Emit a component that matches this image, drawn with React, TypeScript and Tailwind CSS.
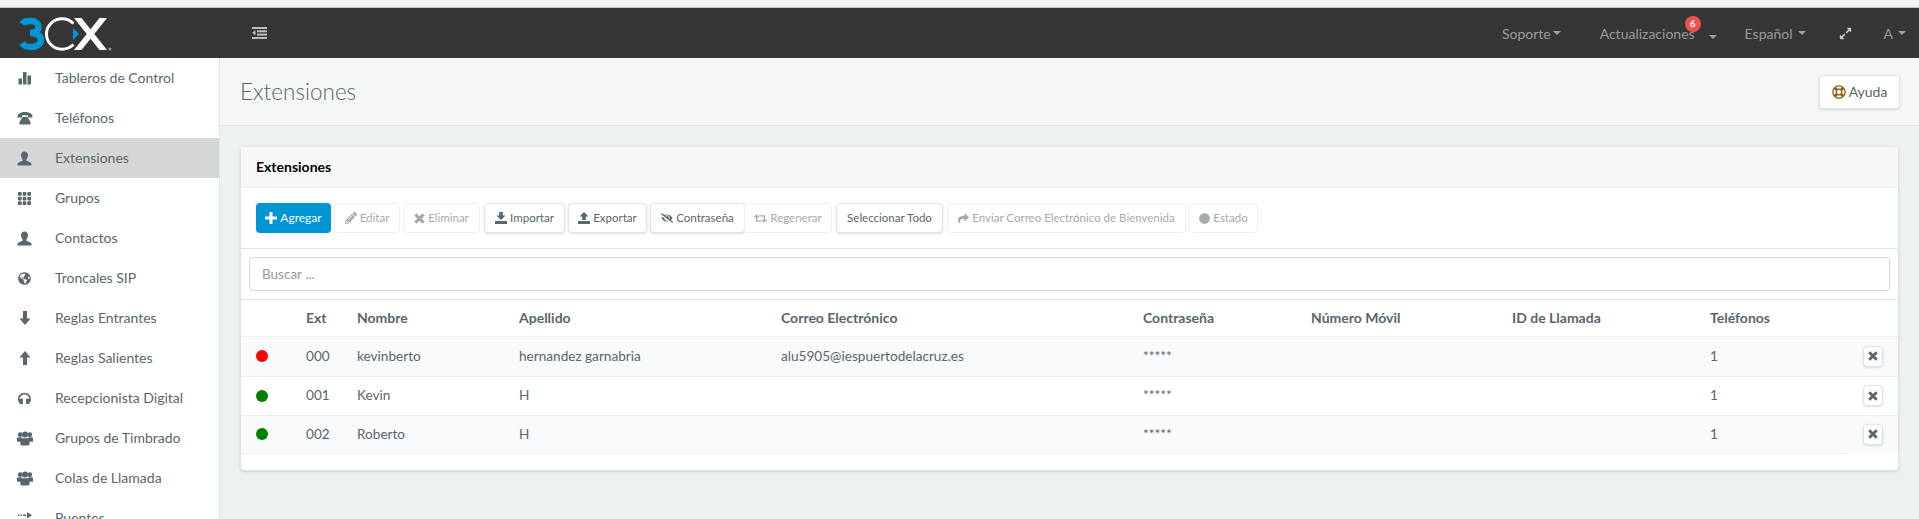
import * as React from "react";
import {
  FaCircle,
  FaExpandAlt,
  FaGlobeAmericas,
  FaHeadphones,
  FaPencilAlt,
  FaRegLifeRing,
  FaRetweet,
  FaShare,
  FaEyeSlash,
} from "react-icons/fa";
import { BsGrid3X3GapFill } from "react-icons/bs";

function BarsIcon() {
  return (
    <svg width="14" height="14" viewBox="0 0 14 14" fill="currentColor">
      <rect x="0.500" y="7.500" width="3.500" height="6" />
      <rect x="5" y="1" width="3.500" height="12.500" />
      <rect x="9.500" y="4.500" width="3.500" height="9" />
    </svg>
  );
}

function PhoneIcon() {
  return (
    <svg width="16" height="14" viewBox="0 0 16 14" fill="currentColor">
      <path d="M0.5 5.5C0.5 2.500 4 1 8 1s7.500 1.500 7.500 4.500V6.500H11V4.500C10 4 6 4 5 4.500V6.500H0.500z" />
      <path d="M5.500 6h5l3 5v2.500h-11V11z" />
    </svg>
  );
}

function UserIcon() {
  return (
    <svg width="15" height="15" viewBox="0 0 15 15" fill="currentColor">
      <path d="M7.500 0.500c2.300 0 3.500 1.800 3.500 3.800 0 1.700-0.700 3.200-1.600 4.100v1.300c1.500 0.800 4.600 1.500 5.100 3v1.800H0.500v-1.800c0.500-1.500 3.600-2.200 5.100-3V8.400C4.700 7.500 4 6 4 4.300c0-2 1.200-3.800 3.500-3.800z" />
    </svg>
  );
}

function UsersIcon() {
  return (
    <svg width="16" height="15" viewBox="0 0 16 15" fill="currentColor">
      <circle cx="3.200" cy="3.700" r="2.400" />
      <circle cx="12.800" cy="3.700" r="2.400" />
      <circle cx="8" cy="3.600" r="3" />
      <path d="M0 7.200c0-0.700 1-1 2-1h2.500v4.500H0zM11.500 6.200H14c1 0 2 0.300 2 1v3.500h-4.500z" />
      <path d="M4.500 7.200h7c0.700 0 1 0.500 1 1V14c-1.500 0.700-8.500 0.700-9 0V8.200c0-0.500 0.300-1 1-1z" />
    </svg>
  );
}

function ArrowIcon({ up }: { up?: boolean }) {
  return (
    <svg width="12" height="14" viewBox="0 0 12 14" fill="currentColor" className={up ? "rotate-180" : ""}>
      <path d="M4 0h4v7.500h3.500L6 14 0.500 7.500H4z" />
    </svg>
  );
}

function ForwardIcon() {
  return (
    <svg width="14" height="12" viewBox="0 0 14 12" fill="currentColor">
      <rect x="0" y="2.500" width="1.500" height="1.500" />
      <rect x="2.500" y="2.500" width="1.500" height="1.500" />
      <rect x="5" y="2.500" width="3" height="1.500" />
      <path d="M9 0l5 3.200-5 3.200z" />
      <rect x="0" y="8" width="8" height="1.500" />
    </svg>
  );
}

function OutdentIcon() {
  return (
    <svg width="15" height="12" viewBox="0 0 15 12" fill="#bdbdbd">
      <rect x="0" y="0" width="15" height="2" />
      <rect x="5" y="3.300" width="10" height="2" />
      <rect x="5" y="6.600" width="10" height="2" />
      <rect x="0" y="10" width="15" height="2" />
      <path d="M3.500 3.300v5L0 5.800z" />
    </svg>
  );
}

function PlusIcon() {
  return (
    <svg width="12" height="12" viewBox="0 0 12 12" fill="currentColor">
      <path d="M4.500 0h3v4.500H12v3H7.500V12h-3V7.500H0v-3h4.500z" />
    </svg>
  );
}

function CrossIcon({ size = 11 }: { size?: number }) {
  return (
    <svg width={size} height={size} viewBox="0 0 12 12" fill="none" stroke="currentColor" strokeWidth="3.400">
      <path d="M1.500 1.500l9 9M10.500 1.500l-9 9" />
    </svg>
  );
}

function TrayIcon({ up }: { up?: boolean }) {
  return (
    <svg width="12" height="12" viewBox="0 0 12 12" fill="currentColor">
      <path d={up ? "M6 0l4.500 4.500H7.800V8H4.200V4.500H1.500z" : "M4.200 0h3.600v3.500h2.700L6 8 1.500 3.500h2.700z"} />
      <rect x="0" y="9" width="12" height="3" />
    </svg>
  );
}

function Logo() {
  return (
    <svg width="96" height="36" viewBox="0 0 96 36" fill="none">
      <path
        d="M3 8C5 5 8 5 12 5c4.500 0 7.500 2.500 7.500 6 0 3.500-3 6-8.500 6 6 0 11 2.500 11 7 0 4.500-5 7-10 7-4 0-7-1-9-4"
        stroke="#0096d6"
        strokeWidth="6.500"
      />
      <path d="M54.500 7.500C51 4 47.500 2.800 43 2.800 34.500 2.800 27.500 9.500 27.500 18S34.500 33.200 43 33.200c4.500 0 8-1.200 11.500-4.700" stroke="#fff" strokeWidth="3" />
      <path d="M54 12l6 6-6 6z" fill="#0096d6" />
      <path d="M55 2h7.500L88 34h-7.500zM80.500 2H88L62.500 34H55z" fill="#fff" />
      <circle cx="91" cy="33" r="1.500" fill="#9a9a9a" />
    </svg>
  );
}

const menu: { label: string; icon: React.ReactNode; active?: boolean }[] = [
  { label: "Tableros de Control", icon: <BarsIcon /> },
  { label: "Teléfonos", icon: <PhoneIcon /> },
  { label: "Extensiones", icon: <UserIcon />, active: true },
  { label: "Grupos", icon: <BsGrid3X3GapFill size={15} /> },
  { label: "Contactos", icon: <UserIcon /> },
  { label: "Troncales SIP", icon: <FaGlobeAmericas size={13} /> },
  { label: "Reglas Entrantes", icon: <ArrowIcon /> },
  { label: "Reglas Salientes", icon: <ArrowIcon up /> },
  { label: "Recepcionista Digital", icon: <FaHeadphones size={13} /> },
  { label: "Grupos de Timbrado", icon: <UsersIcon /> },
  { label: "Colas de Llamada", icon: <UsersIcon /> },
  { label: "Puentes", icon: <ForwardIcon /> },
];

const toolbar: { label: string; icon?: React.ReactNode; width: string; enabled: boolean }[] = [
  { label: "Editar", icon: <FaPencilAlt size={12} />, width: "w-[66px]", enabled: false },
  { label: "Eliminar", icon: <CrossIcon />, width: "w-[77px]", enabled: false },
  { label: "Importar", icon: <TrayIcon />, width: "w-[81px] ml-[1px]", enabled: true },
  { label: "Exportar", icon: <TrayIcon up />, width: "w-[79px]", enabled: true },
  { label: "Contraseña", icon: <FaEyeSlash size={12} />, width: "w-[95px]", enabled: true },
  { label: "Regenerar", icon: <FaRetweet size={13} />, width: "w-[88px] -ml-[4px]", enabled: false },
  { label: "Seleccionar Todo", width: "w-[107px] ml-[1px]", enabled: true },
  { label: "Enviar Correo Electrónico de Bienvenida", icon: <FaShare size={11} />, width: "w-[239px] ml-[1px]", enabled: false },
  { label: "Estado", icon: <FaCircle size={11} />, width: "w-[69px]", enabled: false },
];

const rows = [
  { dot: "bg-[#ff0000]", height: "h-[40px]", ext: "000", first: "kevinberto", last: "hernandez garnabria", mail: "alu5905@iespuertodelacruz.es" },
  { dot: "bg-[#008000]", height: "h-[39px]", ext: "001", first: "Kevin", last: "H", mail: "" },
  { dot: "bg-[#008000]", height: "h-[38px]", ext: "002", first: "Roberto", last: "H", mail: "" },
];

function Caret() {
  return <span className="inline-block border-x-[4px] border-t-[4px] border-x-transparent border-t-[#a0a0a0]" />;
}

export default function App() {
  return (
    <div className="flex h-screen flex-col overflow-hidden bg-[#eef1f2] font-['Lato',sans-serif] text-[13.600px] text-[#58666e]">
      <div className="h-2 shrink-0 border-b border-b-[#c8c8c8] bg-[#f3f3f3]" />

      {/* Top bar */}
      <header className="flex h-[50px] shrink-0 items-center bg-[#363636] text-[14px] text-[#9b9b9b]">
        <div className="w-[220px] pl-[19px] pt-[1px]">
          <Logo />
        </div>
        <div className="ml-[32px]">
          <OutdentIcon />
        </div>
        <nav className="ml-auto flex items-center pr-[13px]">
          <span className="flex items-center gap-[2px]">Soporte <Caret /></span>
          <span className="relative ml-[39px] flex items-center">
            Actualizaciones
            <span className="absolute -top-[7px] left-[85px] flex h-4 w-4 items-center justify-center rounded-full bg-[#f05050] text-[10px] font-bold text-white">
              6
            </span>
            <span className="ml-[14px]"><Caret /></span>
          </span>
          <span className="ml-[28px] flex items-center gap-[5px]">Español <Caret /></span>
          <span className="ml-[33px] text-[#c4c4c4]"><FaExpandAlt size={13} /></span>
          <span className="ml-[32px] flex items-center gap-[5px]">A <Caret /></span>
        </nav>
      </header>

      <div className="flex min-h-0 flex-1">
        {/* Sidebar */}
        <aside className="w-[220px] shrink-0 overflow-hidden border-r border-r-[#dee5e7] bg-white">
          {menu.map((item) => (
            <div
              key={item.label}
              className={`flex h-10 items-center text-[14px] ${item.active ? "bg-[#d6d6d6]" : ""}`}
            >
              <span className="flex w-[55px] justify-center pr-[6px] text-[#58666e]">{item.icon}</span>
              <span className="pb-[2px]">{item.label}</span>
            </div>
          ))}
        </aside>

        <main className="min-w-0 flex-1">
          <div className="flex h-[68px] items-center justify-between border-b border-b-[#dee5e7] bg-[#f5f7f7] pl-[20px] pr-[19px]">
            <h1 className="text-[22.500px] font-light">Extensiones</h1>
            <button className="flex h-[34px] w-[81px] items-center justify-center gap-[3px] rounded-sm border border-[#dee5e7] bg-white text-[14px] shadow-sm">
              <span className="text-[#8a6116]"><FaRegLifeRing size={14} /></span>
              Ayuda
            </button>
          </div>

          {/* Panel */}
          <section className="mx-[20px] mt-[20px] h-[325px] rounded-sm border border-[#dee5e7] bg-white shadow-sm">
            <div className="flex h-[41px] items-center border-b border-b-[#edf1f2] bg-[#f6f8f8] pb-[2px] pl-[15px] text-[14px] font-bold text-black">
              Extensiones
            </div>

            <div className="flex h-[61px] items-center gap-[3px] border-b border-b-[#dee5e7] pl-[15px]">
              <button className="flex h-[30px] w-[75px] items-center justify-center gap-[3px] rounded-sm bg-[#0096d6] text-[12px] text-white">
                <PlusIcon /> Agregar
              </button>
              {toolbar.map((b) => (
                <button
                  key={b.label}
                  className={`flex h-[30px] items-center justify-center gap-[3px] whitespace-nowrap rounded-sm border text-[11.500px] ${b.width} ${
                    b.enabled
                      ? "border-[#dee5e7] bg-white text-[#58666e] shadow-sm"
                      : "border-[#edf1f2] bg-white text-[#a3abb0]"
                  }`}
                >
                  {b.icon}
                  {b.label}
                </button>
              ))}
            </div>

            <div className="border-b border-b-[#dee5e7] px-2 pb-[8px] pt-[8px]">
              <input
                placeholder="Buscar ..."
                className="h-[34px] w-full rounded-sm border border-[#cfdadd] bg-white px-[12px] text-[13.500px] placeholder:text-[#999]"
              />
            </div>

            <table className="w-full table-fixed border-collapse">
              <colgroup>
                <col className="w-[65px]" />
                <col className="w-[51px]" />
                <col className="w-[162px]" />
                <col className="w-[262px]" />
                <col className="w-[362px]" />
                <col className="w-[168px]" />
                <col className="w-[201px]" />
                <col className="w-[198px]" />
                <col className="w-[137px]" />
                <col />
              </colgroup>
              <thead>
                <tr className="h-[36px] border-b border-b-[#edf1f2] text-left text-[14px] font-bold">
                  <th />
                  <th>Ext</th>
                  <th>Nombre</th>
                  <th>Apellido</th>
                  <th>Correo Electrónico</th>
                  <th>Contraseña</th>
                  <th>Número Móvil</th>
                  <th>ID de Llamada</th>
                  <th>Teléfonos</th>
                  <th />
                </tr>
              </thead>
              <tbody>
                {rows.map((r, i) => (
                  <tr key={r.ext} className={`${r.height} ${i % 2 === 0 ? "bg-[#f9fafc]" : ""}`}>
                    <td className="border-b border-b-[#edf1f2] pl-[15px]">
                      <span className={`block h-3 w-3 rounded-full ${r.dot}`} />
                    </td>
                    <td className="border-b border-b-[#edf1f2]">{r.ext}</td>
                    <td className="border-b border-b-[#edf1f2]">{r.first}</td>
                    <td className="border-b border-b-[#edf1f2]">{r.last}</td>
                    <td className="border-b border-b-[#edf1f2]">{r.mail}</td>
                    <td className="border-b border-b-[#edf1f2]">*****</td>
                    <td className="border-b border-b-[#edf1f2]" />
                    <td className="border-b border-b-[#edf1f2]" />
                    <td className="border-b border-b-[#edf1f2]">1</td>
                    <td className={i === 2 ? "" : "border-b border-b-[#edf1f2]"}>
                      <button className="ml-[16px] flex h-[21px] w-[20px] items-center justify-center rounded-sm border border-[#dee5e7] bg-white shadow-sm">
                        <CrossIcon size={10} />
                      </button>
                    </td>
                  </tr>
                ))}
              </tbody>
            </table>
          </section>
        </main>
      </div>
    </div>
  );
}
